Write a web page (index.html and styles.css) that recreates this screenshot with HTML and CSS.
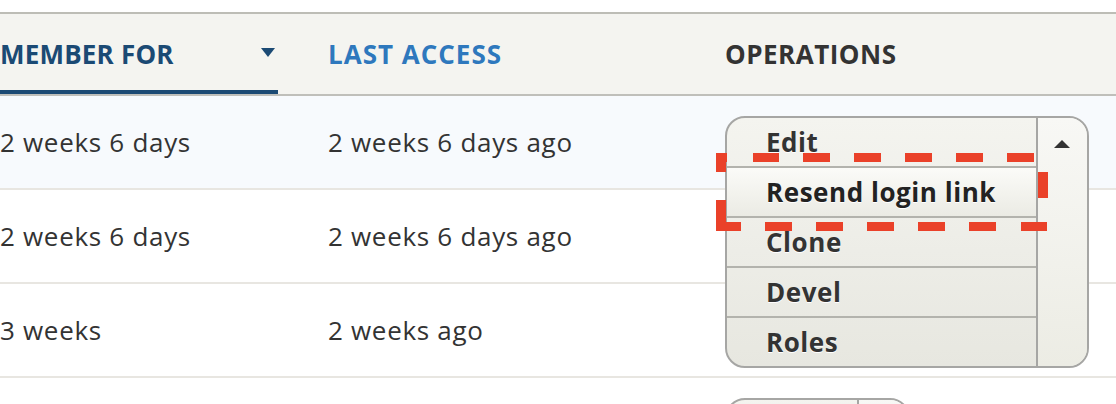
FILE: index.html
```html
<!DOCTYPE html>
<html lang="en">
<head>
<meta charset="utf-8">
<title>People</title>
<link rel="stylesheet" href="styles.css">
</head>
<body>
<div class="page">
  <div class="table">
    <div class="row head">
      <div class="th th-active">
        <span class="th-label">MEMBER FOR</span>
        <svg class="sort-icon" width="14" height="9" viewBox="0 0 14 9"><polygon points="0,0 14,0 7,9" fill="#1b4a74"/></svg>
      </div>
      <div class="th th-link">LAST ACCESS</div>
      <div class="th">OPERATIONS</div>
    </div>

    <div class="row row-hover">
      <div class="td">2 weeks 6 days</div>
      <div class="td">2 weeks 6 days ago</div>
      <div class="td td-ops">
        <div class="dropbutton-wrapper">
          <div class="dropbutton open">
            <ul class="dropbutton-list">
              <li class="db-item">Edit</li>
              <li class="db-item db-hover">Resend login link</li>
              <li class="db-item">Clone</li>
              <li class="db-item">Devel</li>
              <li class="db-item">Roles</li>
            </ul>
            <div class="db-toggle">
              <svg width="16" height="8" viewBox="0 0 16 8"><polygon points="0,8 16,8 8,0" fill="#333"/></svg>
            </div>
          </div>
        </div>
      </div>
    </div>

    <div class="row">
      <div class="td">2 weeks 6 days</div>
      <div class="td">2 weeks 6 days ago</div>
      <div class="td td-ops"></div>
    </div>

    <div class="row">
      <div class="td">3 weeks</div>
      <div class="td">2 weeks ago</div>
      <div class="td td-ops"></div>
    </div>

    <div class="row row-last">
      <div class="td"></div>
      <div class="td"></div>
      <div class="td td-ops">
        <div class="dropbutton closed">
          <div class="dropbutton-list"></div>
          <div class="db-toggle"></div>
        </div>
      </div>
    </div>
  </div>

  <svg class="annotation" width="1116" height="404" viewBox="0 0 1116 404">
    <g fill="#ea4129">
      <rect x="716" y="153" width="10" height="19"/>
      <rect x="716" y="153" width="11" height="9"/>
      <rect x="753" y="153" width="26" height="9"/>
      <rect x="803" y="153" width="27" height="9"/>
      <rect x="854" y="153" width="27" height="9"/>
      <rect x="905" y="153" width="27" height="9"/>
      <rect x="956" y="153" width="27" height="9"/>
      <rect x="1007" y="153" width="27" height="9"/>
      <rect x="1038" y="172" width="10" height="26"/>
      <rect x="716" y="200" width="10" height="31"/>
      <rect x="716" y="222" width="25" height="9"/>
      <rect x="765" y="222" width="27" height="9"/>
      <rect x="816" y="222" width="27" height="9"/>
      <rect x="867" y="222" width="27" height="9"/>
      <rect x="918" y="222" width="27" height="9"/>
      <rect x="969" y="222" width="27" height="9"/>
      <rect x="1021" y="222" width="26" height="9"/>
    </g>
  </svg>
</div>
</body>
</html>
```

FILE: styles.css
```css
* {
  box-sizing: border-box;
}

html, body {
  margin: 0;
  padding: 0;
  background: #ffffff;
}

body {
  font-family: "Open Sans", "Noto Sans", sans-serif;
  font-size: 26px;
  color: #333333;
  width: 1116px;
  height: 404px;
  overflow: hidden;
}

.page {
  position: relative;
  width: 1116px;
  height: 404px;
  overflow: hidden;
  padding-top: 12px;
}

.table {
  display: flex;
  flex-direction: column;
}

.row {
  display: grid;
  grid-template-columns: 278px 397px 1fr;
  height: 94px;
  border-bottom: 2px solid #e8e6e1;
}

.row.head {
  height: 84px;
  background: #f4f4f0;
  border-top: 2px solid #bdbdb6;
  border-bottom: 2px solid #bfbfba;
}

.th {
  display: flex;
  align-items: center;
  padding-left: 50px;
  font-weight: 700;
  color: #333333;
  letter-spacing: 0.5px;
}

.th-active {
  padding-left: 0;
  padding-right: 3px;
  justify-content: space-between;
  color: #1b4a74;
  border-bottom: 4px solid #1b4a74;
  padding-top: 4px;
  letter-spacing: 0.2px;
}

.sort-icon {
  display: block;
  margin-top: -4px;
}

.th-link {
  color: #2e78bd;
  letter-spacing: 1px;
}

.row-hover {
  background: #f7fafd;
}

.td {
  display: flex;
  align-items: center;
  padding-left: 50px;
  letter-spacing: 0.7px;
}

.td:first-child {
  padding-left: 0;
}

.td-ops {
  align-items: flex-start;
  padding-top: 20px;
  letter-spacing: 0;
}

.dropbutton-wrapper {
  position: relative;
  width: 364px;
  height: 52px;
}

.dropbutton {
  display: flex;
  width: 364px;
  border: 2px solid #a6a6a4;
  border-radius: 20px;
  overflow: hidden;
  background: linear-gradient(to bottom, #f4f4ef, #e7e7e0);
}

.dropbutton.open {
  position: absolute;
  top: 0;
  left: 0;
  z-index: 2;
}

.dropbutton.closed {
  width: 185px;
  height: 60px;
}

.dropbutton-list {
  list-style: none;
  margin: 0;
  padding: 0;
  flex: 1;
}

.db-item {
  height: 50px;
  line-height: 48px;
  padding-left: 39px;
  font-weight: 700;
  color: #333333;
  letter-spacing: 0.55px;
  text-shadow: 0 1px 0 #ffffff;
  border-top: 2px solid #b3b3ad;
  white-space: nowrap;
}

.db-item:first-child {
  height: 48px;
  border-top: 0;
}

.db-hover {
  color: #222222;
  background: linear-gradient(to bottom, #fbfbf8, #ebebe4);
}

.db-toggle {
  width: 51px;
  flex: none;
  border-left: 2px solid #a6a6a4;
  background: linear-gradient(to bottom, #f8f8f5, #ecece4);
  display: flex;
  justify-content: center;
  padding-top: 22px;
  padding-right: 2px;
}

.db-toggle svg {
  display: block;
}

.annotation {
  position: absolute;
  top: 0;
  left: 0;
  pointer-events: none;
  z-index: 5;
}
```
